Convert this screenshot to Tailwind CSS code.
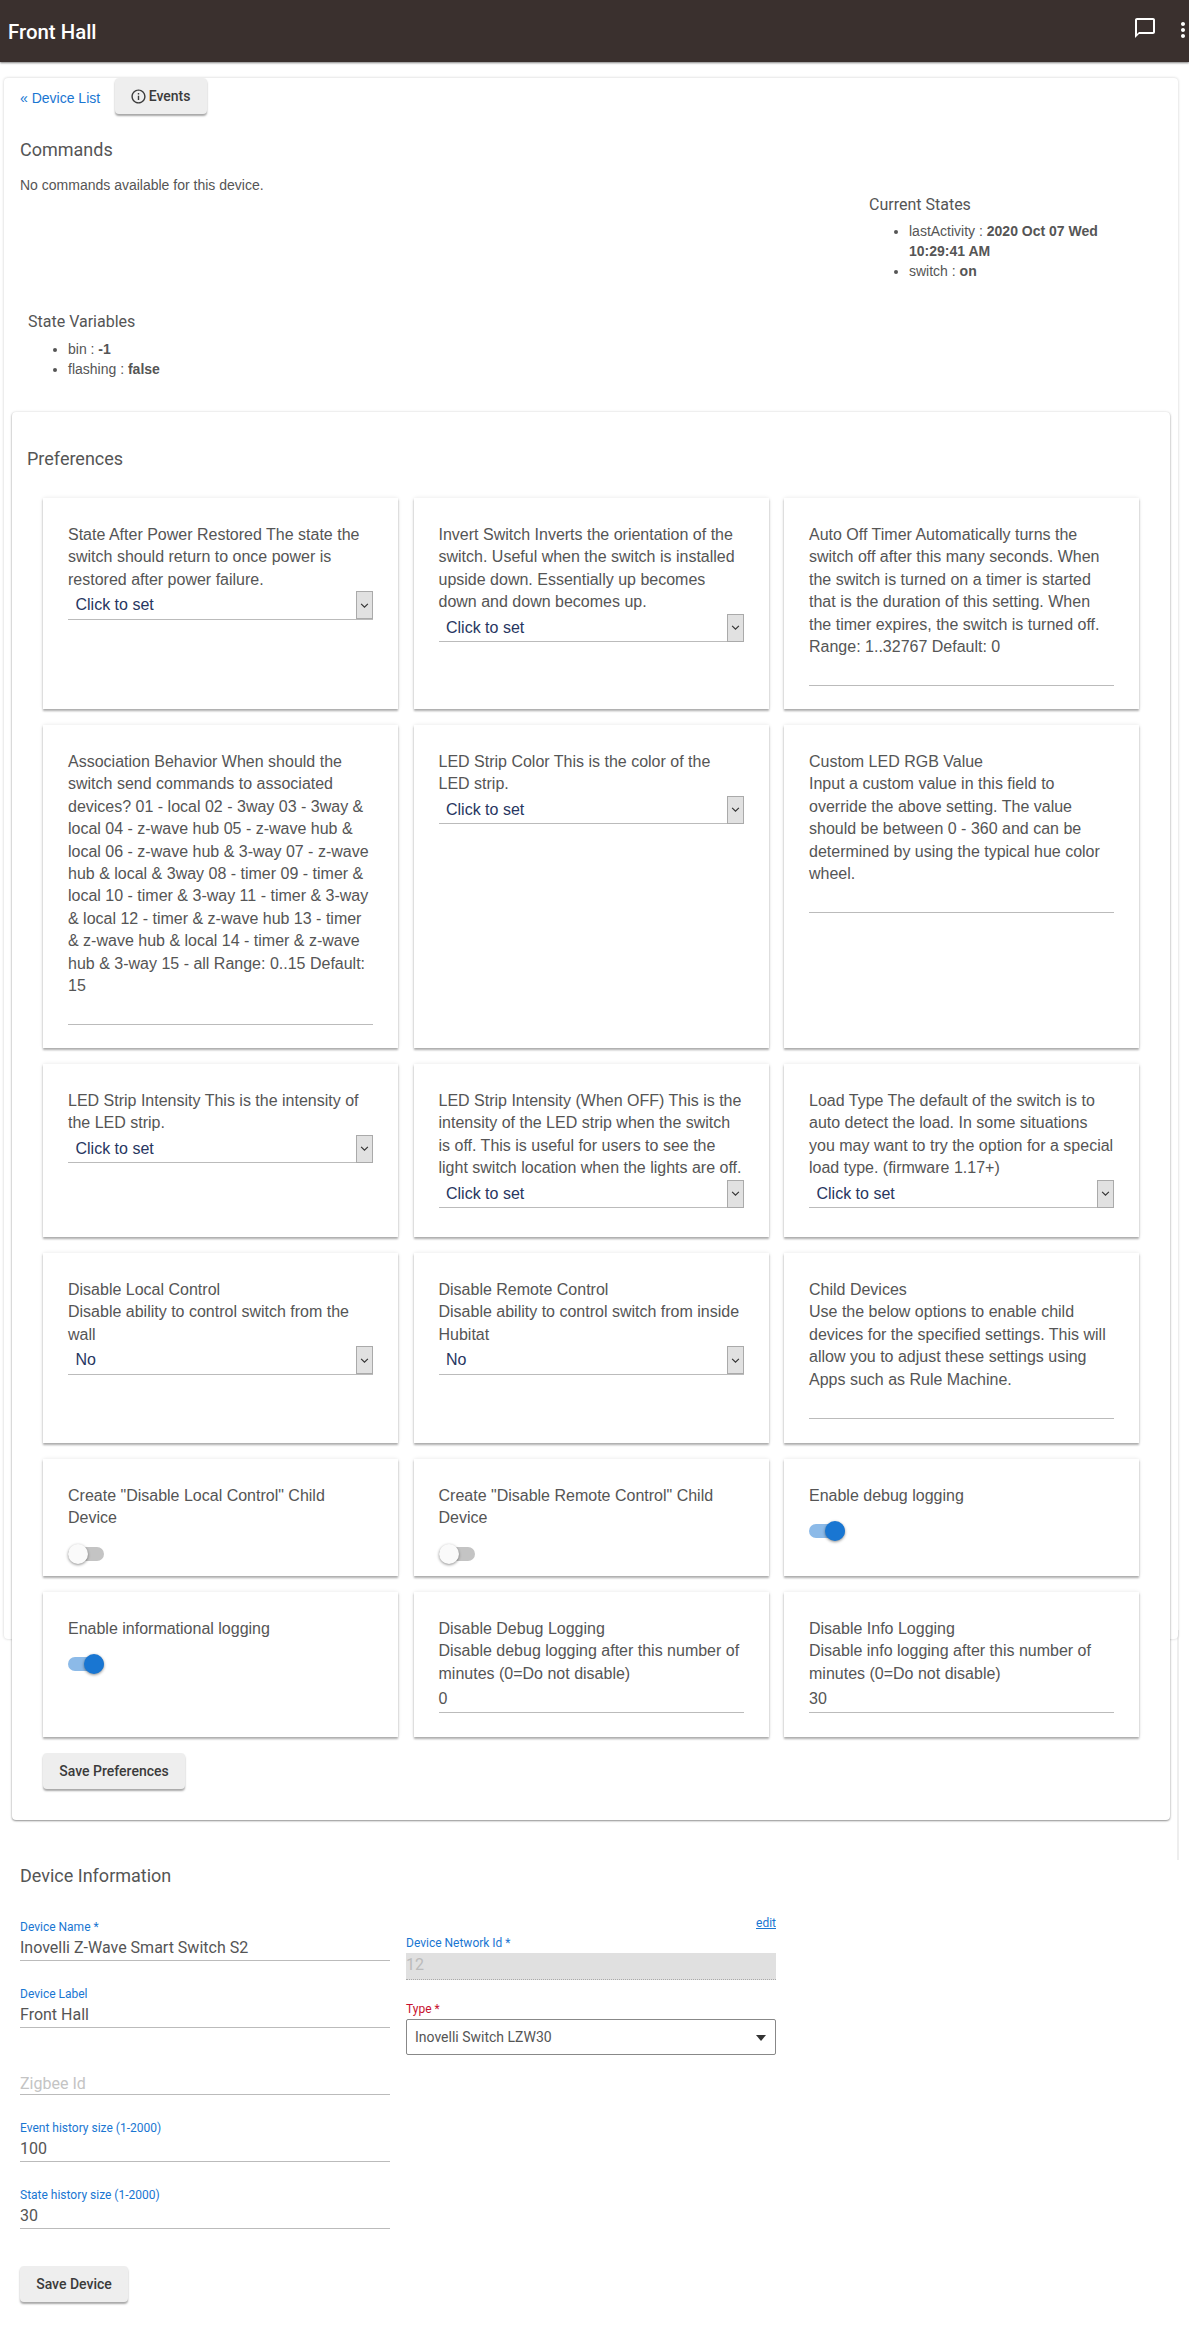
<!DOCTYPE html>
<html lang="en">
<head>
  <meta charset="UTF-8">
  <title>Front Hall</title>
  <script src="https://cdn.jsdelivr.net/npm/@tailwindcss/browser@4"></script>
</head>
<body class="relative bg-white h-[2345px] overflow-hidden font-['Liberation_Sans',Arial,sans-serif] text-[#555]">
  <header class="relative h-[62px] bg-[#3a302e] shadow-[0_1px_2px_rgba(0,0,0,0.5)] flex items-center pl-2 pt-[3px] z-10">
    <h1 class="font-['Roboto',sans-serif] font-medium text-[20.400px] text-white">Front Hall</h1>
    <svg class="absolute left-[1133px] top-[16px] w-6 h-6" viewBox="0 0 24 24" fill="white"><path d="M20 2H4c-1.100 0-2 .9-2 2v18l4-4h14c1.100 0 2-.9 2-2V4c0-1.100-.9-2-2-2zm0 14H6l-2 2V4h16v12z"/></svg>
    <svg class="absolute left-[1171px] top-[18px] w-6 h-6" viewBox="0 0 24 24" fill="white"><path d="M12 8c1.100 0 2-.9 2-2s-.9-2-2-2-2 .9-2 2 .9 2 2 2zm0 2c-1.100 0-2 .9-2 2s.9 2 2 2 2-.9 2-2-.9-2-2-2zm0 6c-1.100 0-2 .9-2 2s.9 2 2 2 2-.9 2-2-.9-2-2-2z"/></svg>
  </header>

  <!-- right edge of the page card runs on below the left one -->
  <div class="absolute left-[1177px] top-[1630px] w-[2px] h-[230px] bg-[#eee]"></div>

  <div class="relative mt-4 mx-1 h-[1561px] w-[1174px] rounded-sm bg-white shadow-[0_0_3px_rgba(0,0,0,0.2)]">
    <div class="flex items-start pl-4 h-[52px]">
      <a class="mt-[10px] text-[14px] text-[#1976d2]">« Device List</a>
      <button class="ml-[15px] w-[92px] h-[36px] flex items-center justify-start pl-[15px] gap-[1.500px] rounded-sm bg-[#eee] shadow-[0_2px_2px_rgba(0,0,0,0.35)] font-['Roboto',sans-serif] font-medium text-[14px] text-[#3b3b3b]">
        <svg class="w-[17px] h-[17px]" viewBox="0 0 24 24" fill="#3b3b3b"><path d="M11 7h2v2h-2zm0 4h2v6h-2zm1-9C6.480 2 2 6.480 2 12s4.480 10 10 10 10-4.480 10-10S17.520 2 12 2zm0 18c-4.410 0-8-3.590-8-8s3.590-8 8-8 8 3.590 8 8-3.590 8-8 8z"/></svg>
        Events
      </button>
    </div>
    <div class="relative h-[282px] pl-4">
      <h2 class="font-['Roboto',sans-serif] text-[18px] leading-[20px] pt-[10px]">Commands</h2>
      <p class="mt-[17px] text-[14px] leading-[16px]">No commands available for this device.</p>
      <div class="absolute left-[865px] top-[65px] w-[260px]">
        <h3 class="font-['Roboto',sans-serif] text-[16px] leading-[20px]">Current States</h3>
        <ul class="mt-[5.500px] pl-10 list-disc text-[14px] leading-[20px]">
          <li>lastActivity : <b>2020 Oct 07 Wed 10:29:41 AM</b></li>
          <li>switch : <b>on</b></li>
        </ul>
      </div>
      <div class="absolute left-6 top-[182px]">
        <h3 class="font-['Roboto',sans-serif] text-[16px] leading-[20px]">State Variables</h3>
        <ul class="mt-[6.500px] pl-10 list-disc text-[14px] leading-[20px]">
          <li>bin : <b>-1</b></li>
          <li>flashing : <b>false</b></li>
        </ul>
      </div>
    </div>
  </div>

  <main class="relative z-10 -mt-[1227px] mx-3 w-[1158px] h-[1408px] bg-white rounded-sm shadow-[0_1px_2px_rgba(0,0,0,0.4),0_0_3px_rgba(0,0,0,0.12)]">
    <h2 class="pl-[15px] pt-[36.500px] font-['Roboto',sans-serif] text-[18px] leading-[20px]">Preferences</h2>
    <div class="mt-[29.500px] ml-[31px] grid grid-cols-[355px_355px_355px] gap-x-[15.500px] gap-y-4 grid-rows-[211px_323px_173px_190px_117px_145px] text-[16px] leading-[22.400px]">

      <div class="bg-white pt-[26px] px-[25px] shadow-[0_2px_2px_rgba(0,0,0,0.3),0_0_4px_rgba(0,0,0,0.1)]">
        State After Power Restored The state the switch should return to once power is restored after power failure.
        <div class="relative h-[28.500px] border-b border-[#bbb] pl-[7.500px] pt-[2px] leading-[24px] text-[#27365f]">Click to set
          <span class="absolute right-0 top-0 w-[17px] h-[28px] flex items-center justify-center bg-[#e1e1e1] border border-[#aaa]"><svg class="w-[9px] h-[9px]" viewBox="0 0 8 8" fill="none" stroke="#333"><path d="M1 2.500l3 3 3-3"/></svg></span>
        </div>
      </div>

      <div class="bg-white pt-[26px] px-[25px] shadow-[0_2px_2px_rgba(0,0,0,0.3),0_0_4px_rgba(0,0,0,0.1)]">
        Invert Switch Inverts the orientation of the switch. Useful when the switch is installed upside down. Essentially up becomes down and down becomes up.
        <div class="relative h-[28.500px] border-b border-[#bbb] pl-[7.500px] pt-[2px] leading-[24px] text-[#27365f]">Click to set
          <span class="absolute right-0 top-0 w-[17px] h-[28px] flex items-center justify-center bg-[#e1e1e1] border border-[#aaa]"><svg class="w-[9px] h-[9px]" viewBox="0 0 8 8" fill="none" stroke="#333"><path d="M1 2.500l3 3 3-3"/></svg></span>
        </div>
      </div>

      <div class="bg-white pt-[26px] px-[25px] shadow-[0_2px_2px_rgba(0,0,0,0.3),0_0_4px_rgba(0,0,0,0.1)]">
        Auto Off Timer Automatically turns the switch off after this many seconds. When the switch is turned on a timer is started that is the duration of this setting. When the timer expires, the switch is turned off. Range: 1..32767 Default: 0
        <div class="h-[28px] border-b border-[#bbb]"></div>
      </div>

      <div class="bg-white pt-[26px] px-[25px] shadow-[0_2px_2px_rgba(0,0,0,0.3),0_0_4px_rgba(0,0,0,0.1)]">
        Association Behavior When should the switch send commands to associated devices? 01 - local 02 - 3way 03 - 3way &amp; local 04 - z-wave hub 05 - z-wave hub &amp; local 06 - z-wave hub &amp; 3-way 07 - z-wave hub &amp; local &amp; 3way 08 - timer 09 - timer &amp; local 10 - timer &amp; 3-way 11 - timer &amp; 3-way &amp; local 12 - timer &amp; z-wave hub 13 - timer &amp; z-wave hub &amp; local 14 - timer &amp; z-wave hub &amp; 3-way 15 - all Range: 0..15 Default: 15
        <div class="h-[28px] border-b border-[#bbb]"></div>
      </div>

      <div class="bg-white pt-[26px] px-[25px] shadow-[0_2px_2px_rgba(0,0,0,0.3),0_0_4px_rgba(0,0,0,0.1)]">
        LED Strip Color This is the color of the LED strip.
        <div class="relative h-[28.500px] border-b border-[#bbb] pl-[7.500px] pt-[2px] leading-[24px] text-[#27365f]">Click to set
          <span class="absolute right-0 top-0 w-[17px] h-[28px] flex items-center justify-center bg-[#e1e1e1] border border-[#aaa]"><svg class="w-[9px] h-[9px]" viewBox="0 0 8 8" fill="none" stroke="#333"><path d="M1 2.500l3 3 3-3"/></svg></span>
        </div>
      </div>

      <div class="bg-white pt-[26px] px-[25px] shadow-[0_2px_2px_rgba(0,0,0,0.3),0_0_4px_rgba(0,0,0,0.1)]">
        Custom LED RGB Value<br>Input a custom value in this field to override the above setting. The value should be between 0 - 360 and can be determined by using the typical hue color wheel.
        <div class="h-[28px] border-b border-[#bbb]"></div>
      </div>

      <div class="bg-white pt-[26px] px-[25px] shadow-[0_2px_2px_rgba(0,0,0,0.3),0_0_4px_rgba(0,0,0,0.1)]">
        LED Strip Intensity This is the intensity of the LED strip.
        <div class="relative h-[28.500px] border-b border-[#bbb] pl-[7.500px] pt-[2px] leading-[24px] text-[#27365f]">Click to set
          <span class="absolute right-0 top-0 w-[17px] h-[28px] flex items-center justify-center bg-[#e1e1e1] border border-[#aaa]"><svg class="w-[9px] h-[9px]" viewBox="0 0 8 8" fill="none" stroke="#333"><path d="M1 2.500l3 3 3-3"/></svg></span>
        </div>
      </div>

      <div class="bg-white pt-[26px] px-[25px] shadow-[0_2px_2px_rgba(0,0,0,0.3),0_0_4px_rgba(0,0,0,0.1)]">
        LED Strip Intensity (When OFF) This is the intensity of the LED strip when the switch is off. This is useful for users to see the light switch location when the lights are off.
        <div class="relative h-[28.500px] border-b border-[#bbb] pl-[7.500px] pt-[2px] leading-[24px] text-[#27365f]">Click to set
          <span class="absolute right-0 top-0 w-[17px] h-[28px] flex items-center justify-center bg-[#e1e1e1] border border-[#aaa]"><svg class="w-[9px] h-[9px]" viewBox="0 0 8 8" fill="none" stroke="#333"><path d="M1 2.500l3 3 3-3"/></svg></span>
        </div>
      </div>

      <div class="bg-white pt-[26px] px-[25px] shadow-[0_2px_2px_rgba(0,0,0,0.3),0_0_4px_rgba(0,0,0,0.1)]">
        Load Type The default of the switch is to auto detect the load. In some situations you may want to try the option for a special load type. (firmware 1.17+)
        <div class="relative h-[28.500px] border-b border-[#bbb] pl-[7.500px] pt-[2px] leading-[24px] text-[#27365f]">Click to set
          <span class="absolute right-0 top-0 w-[17px] h-[28px] flex items-center justify-center bg-[#e1e1e1] border border-[#aaa]"><svg class="w-[9px] h-[9px]" viewBox="0 0 8 8" fill="none" stroke="#333"><path d="M1 2.500l3 3 3-3"/></svg></span>
        </div>
      </div>

      <div class="bg-white pt-[26px] px-[25px] shadow-[0_2px_2px_rgba(0,0,0,0.3),0_0_4px_rgba(0,0,0,0.1)]">
        Disable Local Control<br>Disable ability to control switch from the wall
        <div class="relative h-[28.500px] border-b border-[#bbb] pl-[7.500px] pt-[2px] leading-[24px] text-[#27365f]">No
          <span class="absolute right-0 top-0 w-[17px] h-[28px] flex items-center justify-center bg-[#e1e1e1] border border-[#aaa]"><svg class="w-[9px] h-[9px]" viewBox="0 0 8 8" fill="none" stroke="#333"><path d="M1 2.500l3 3 3-3"/></svg></span>
        </div>
      </div>

      <div class="bg-white pt-[26px] px-[25px] shadow-[0_2px_2px_rgba(0,0,0,0.3),0_0_4px_rgba(0,0,0,0.1)]">
        Disable Remote Control<br>Disable ability to control switch from inside Hubitat
        <div class="relative h-[28.500px] border-b border-[#bbb] pl-[7.500px] pt-[2px] leading-[24px] text-[#27365f]">No
          <span class="absolute right-0 top-0 w-[17px] h-[28px] flex items-center justify-center bg-[#e1e1e1] border border-[#aaa]"><svg class="w-[9px] h-[9px]" viewBox="0 0 8 8" fill="none" stroke="#333"><path d="M1 2.500l3 3 3-3"/></svg></span>
        </div>
      </div>

      <div class="bg-white pt-[26px] px-[25px] shadow-[0_2px_2px_rgba(0,0,0,0.3),0_0_4px_rgba(0,0,0,0.1)]">
        Child Devices<br>Use the below options to enable child devices for the specified settings. This will allow you to adjust these settings using Apps such as Rule Machine.
        <div class="h-[28px] border-b border-[#bbb]"></div>
      </div>

      <div class="bg-white pt-[26px] px-[25px] shadow-[0_2px_2px_rgba(0,0,0,0.3),0_0_4px_rgba(0,0,0,0.1)]">
        Create "Disable Local Control" Child Device
        <div class="relative mt-[17px] w-9 h-[14px] rounded-full bg-[#c4c4c4]"><span class="absolute left-0 top-[-3px] w-5 h-5 rounded-full bg-[#fafafa] shadow-[0_1px_3px_rgba(0,0,0,0.45)]"></span></div>
      </div>

      <div class="bg-white pt-[26px] px-[25px] shadow-[0_2px_2px_rgba(0,0,0,0.3),0_0_4px_rgba(0,0,0,0.1)]">
        Create "Disable Remote Control" Child Device
        <div class="relative mt-[17px] w-9 h-[14px] rounded-full bg-[#c4c4c4]"><span class="absolute left-0 top-[-3px] w-5 h-5 rounded-full bg-[#fafafa] shadow-[0_1px_3px_rgba(0,0,0,0.45)]"></span></div>
      </div>

      <div class="bg-white pt-[26px] px-[25px] shadow-[0_2px_2px_rgba(0,0,0,0.3),0_0_4px_rgba(0,0,0,0.1)]">
        Enable debug logging
        <div class="relative mt-[17px] w-9 h-[14px] rounded-full bg-[#8cbae8]"><span class="absolute right-0 top-[-3px] w-5 h-5 rounded-full bg-[#1976d2] shadow-[0_1px_3px_rgba(0,0,0,0.45)]"></span></div>
      </div>

      <div class="bg-white pt-[26px] px-[25px] shadow-[0_2px_2px_rgba(0,0,0,0.3),0_0_4px_rgba(0,0,0,0.1)]">
        Enable informational logging
        <div class="relative mt-[17px] w-9 h-[14px] rounded-full bg-[#8cbae8]"><span class="absolute right-0 top-[-3px] w-5 h-5 rounded-full bg-[#1976d2] shadow-[0_1px_3px_rgba(0,0,0,0.45)]"></span></div>
      </div>

      <div class="bg-white pt-[26px] px-[25px] shadow-[0_2px_2px_rgba(0,0,0,0.3),0_0_4px_rgba(0,0,0,0.1)]">
        Disable Debug Logging<br>Disable debug logging after this number of minutes (0=Do not disable)
        <div class="h-[28px] border-b border-[#bbb] pt-[1.500px] leading-[24px]">0</div>
      </div>

      <div class="bg-white pt-[26px] px-[25px] shadow-[0_2px_2px_rgba(0,0,0,0.3),0_0_4px_rgba(0,0,0,0.1)]">
        Disable Info Logging<br>Disable info logging after this number of minutes (0=Do not disable)
        <div class="h-[28px] border-b border-[#bbb] pt-[1.500px] leading-[24px]">30</div>
      </div>
    </div>
    <button class="mt-4 ml-[31px] w-[142px] h-[36px] rounded-sm bg-[#eee] shadow-[0_2px_2px_rgba(0,0,0,0.35)] font-['Roboto',sans-serif] font-medium text-[14px] text-[#3b3b3b]">Save Preferences</button>
  </main>

  <section class="relative mt-[46px] pl-5 h-[450px] font-['Roboto',sans-serif]">
    <h2 class="text-[18px] leading-[20px]">Device Information</h2>
    <div class="mt-[34px] grid grid-cols-[370px_370px] gap-x-4">
      <div>
        <label class="block h-[15px] text-[12px] leading-[15px] text-[#1976d2]">Device Name *</label>
        <div class="h-[26px] border-b border-[#bbb] text-[16px] leading-[24px] pt-[1px]">Inovelli Z-Wave Smart Switch S2</div>
        <label class="block mt-[26px] h-[15px] text-[12px] leading-[15px] text-[#1976d2]">Device Label</label>
        <div class="h-[26px] border-b border-[#bbb] text-[16px] leading-[24px] pt-[1px]">Front Hall</div>
        <div class="mt-[41px] h-[26px] border-b border-[#bbb] text-[16px] leading-[24px] pt-[3px] text-[#c4c4c4]">Zigbee Id</div>
        <label class="block mt-[26px] h-[15px] text-[12px] leading-[15px] text-[#1976d2]">Event history size (1-2000)</label>
        <div class="h-[26px] border-b border-[#bbb] text-[16px] leading-[24px] pt-[1px]">100</div>
        <label class="block mt-[26px] h-[15px] text-[12px] leading-[15px] text-[#1976d2]">State history size (1-2000)</label>
        <div class="h-[26px] border-b border-[#bbb] text-[16px] leading-[24px] pt-[1px]">30</div>
        <button class="mt-[37px] w-[108px] h-[36px] rounded-sm bg-[#eee] shadow-[0_2px_2px_rgba(0,0,0,0.35)] font-medium text-[14px] text-[#3b3b3b]">Save Device</button>
      </div>
      <div class="-mt-[4px]">
        <a class="block text-right text-[12px] leading-[15px] text-[#1976d2] underline">edit</a>
        <label class="block mt-[5px] h-[17px] text-[12px] leading-[15px] text-[#1976d2]">Device Network Id *</label>
        <div class="h-[27px] bg-[#e0e0e0] border-b border-dotted border-[#aaa] text-[16px] leading-[24px] text-[#bbb]">12</div>
        <label class="block mt-[22px] h-[17px] text-[12px] leading-[15px] text-[#c8102e]">Type *</label>
        <div class="relative h-[36px] border border-[#888] rounded-[2px] pl-2 text-[14px] leading-[34px]">Inovelli Switch LZW30
          <svg class="absolute right-[9px] top-[15px] w-[10px] h-[6px]" viewBox="0 0 10 6" fill="#333"><path d="M0 0h10L5 6z"/></svg>
        </div>
      </div>
    </div>
  </section>
</body>
</html>
